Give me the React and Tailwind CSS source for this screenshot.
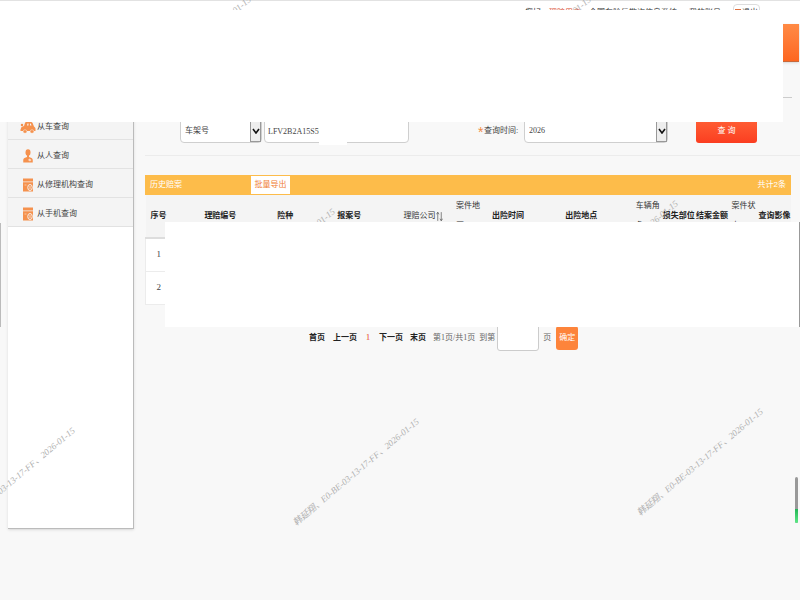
import React, { useState } from 'react';

const CarIcon = () => (
  <svg viewBox="0 0 32 26" className="w-4 h-[13px]" fill="#f5914d">
    <path d="M1 17l2-5 5-2 2-6c.5-1.500 1.500-2 3-2h9c1.500 0 2.500.6 3.200 2l2.800 7 2 2c1 1 1 2 1 3v4h-3a4 4 0 0 1-8 0h-6a4 4 0 0 1-8 0H1z" />
    <path d="M14 9l1-4h2v4zM20 5h1.500l1.500 4h-3z" fill="#f4f4f4" />
    <circle cx="4" cy="8" r="2.500" />
    <circle cx="10" cy="21" r="3.600" stroke="#f4f4f4" />
    <circle cx="24" cy="21" r="3.600" stroke="#f4f4f4" />
  </svg>
);

const PersonIcon = () => (
  <svg viewBox="0 0 20 28" className="w-[10px] h-[14px]" fill="#f5914d">
    <ellipse cx="10" cy="7" rx="5" ry="6.500" />
    <path d="M8 12h4v4l5 2c2 1 2.500 3 2.500 5v4H.5v-4c0-2 .5-4 2.500-5l5-2z" />
    <path d="M10 22l3-3 4 3-3 3z" fill="#fbd9c2" />
  </svg>
);

const RecordIcon = () => (
  <svg viewBox="0 0 20 28" className="w-[10px] h-[14px]">
    <path d="M0 1h20v6H0z" fill="#f5914d" />
    <path d="M0 8.500h20V27H0z" fill="#f5914d" />
    <path d="M3 14h4" stroke="#fbd9c2" strokeWidth="1.500" />
    <ellipse cx="14" cy="19" rx="4.500" ry="6" fill="#f5914d" stroke="#f4f4f4" strokeWidth="2" />
    <path d="M14 16v6" stroke="#f4f4f4" strokeWidth="1.500" />
  </svg>
);

const SortIcon = () => (
  <svg viewBox="0 0 8 12" className="w-[7px] h-[11px] shrink-0" fill="none" stroke="#555" strokeWidth="0.8">
    <path d="M2 11V1.500M.5 3.500L2 1l1.500 2.500M6 1v9.500M4.500 8.500L6 11l1.500-2.500" />
  </svg>
);

const navItems = [
  { label: '从车查询', Icon: CarIcon },
  { label: '从人查询', Icon: PersonIcon },
  { label: '从修理机构查询', Icon: RecordIcon },
  { label: '从手机查询', Icon: RecordIcon },
];

const columns = [
  { title: '序号', width: 26 },
  { title: '理赔编号', width: 98 },
  { title: '险种', width: 32 },
  { title: '报案号', width: 96 },
  { title: '理赔公司', width: 52, sortable: true },
  { title: '案件地', rest: '区', width: 38 },
  { title: '出险时间', width: 42 },
  { title: '出险地点', width: 105 },
  { title: '车辆角', rest: '色', width: 28 },
  { title: '损失部位', width: 34 },
  { title: '结案金额', width: 33 },
  { title: '案件状', rest: '态', width: 30 },
  { title: '查询影像', width: 32 },
];

const totalWidth = columns.reduce((sum, col) => sum + col.width, 0);

const watermarks = [
  'left-[98px] top-[44px]',
  'left-[438px] top-[44px]',
  'left-[182px] top-[256px]',
  'left-[525px] top-[248px]',
  'left-[-78px] top-[475px]',
  'left-[266px] top-[466px]',
  'left-[610px] top-[456px]',
];

const SelectBox = ({ id, label, value, className }) => (
  <div className={`flex h-6 rounded-b-sm border border-[#cfcfcf] bg-white ${className}`}>
    <select
      id={id}
      aria-label={label}
      defaultValue={value}
      className="min-w-0 flex-1 appearance-none bg-transparent pl-1 font-['Liberation_Serif','Noto_Sans_CJK_SC',serif] text-[8px] text-[#444] outline-none"
    >
      <option>{value}</option>
    </select>
    <span className="pointer-events-none flex w-[11px] items-center justify-center border border-[#999] bg-[#eee]">
      <svg viewBox="0 0 8 6" className="h-[6px] w-2" fill="none" stroke="#111" strokeWidth="1.6">
        <path d="M1 1l3 4 3-4" />
      </svg>
    </span>
  </div>
);

const Header = () => (
  <header className="relative h-[111px]">
    <div className="h-6 border-t border-[#e2e2e2] bg-white pt-[3px] pr-10">
      <div className="flex items-center justify-end text-[8px] leading-4 whitespace-nowrap text-[#333]">
        <span>您好，</span>
        <span className="text-[#d9482b]">理赔用户</span>
        <span className="ml-2">全国车险反欺诈信息系统</span>
        <a href="#account" className="ml-3">我的账号</a>
        <a href="#logout" className="ml-3 flex items-center gap-px rounded border border-[#ddd] px-px">
          <i className="h-2 w-[6px] border border-[#e0703f]" />
          退出
        </a>
      </div>
    </div>
    <div className="mr-px h-[38px] border-b border-[#c8683a] bg-linear-to-b from-[#ff8a45] to-[#fd661f] shadow" />
    <div className="mr-2 h-9 border-b border-[#ccc]" />
    <div className="absolute top-[10px] right-[17px] left-0 z-20 h-[112px] bg-white" />
  </header>
);

const Sidebar = () => (
  <aside className="ml-2 min-h-[418px] w-[126px] shrink-0 border-r border-b border-[#bbb] bg-white shadow-sm">
    <nav>
      {navItems.map(({ label, Icon }) => (
        <a
          key={label}
          href="#query"
          className="flex h-[29px] items-center border-b border-[#e2e2e2] bg-[#f4f4f4] pt-1 pl-3 text-[8px] text-[#444]"
        >
          <span className="mr-px flex w-4 justify-center">
            <Icon />
          </span>
          {label}
        </a>
      ))}
    </nav>
  </aside>
);

const SearchForm = ({ onSearch }) => {
  const [frameNo, setFrameNo] = useState('LFV2B2A15S550');

  return (
    <form
      onSubmit={onSearch}
      className="flex h-[45px] border-b border-[#ececec] pt-2 pl-[35px] text-[8px] text-[#444]"
    >
      <SelectBox id="kind" label="查询类型" value="车架号" className="w-[82px]" />
      <div className="relative ml-[2px] w-[145px]">
        <input
          aria-label="车架号"
          value={frameNo}
          onChange={(e) => setFrameNo(e.target.value)}
          className="h-6 w-full rounded-b-sm border border-[#cfcfcf] bg-white px-[3px] font-['Liberation_Serif',serif] text-[8px]"
        />
        <div className="absolute top-0 left-[55px] h-[26px] w-7 bg-white" />
      </div>
      <label htmlFor="year" className="ml-[69px] flex w-[46px] leading-6 whitespace-nowrap">
        <span className="w-[6px] pt-px text-sm leading-6 text-[#f08c45]">*</span>
        查询时间:
      </label>
      <SelectBox id="year" label="查询时间" value="2026" className="w-36" />
      <button
        type="submit"
        className="ml-7 h-6 w-[61px] rounded-[3px] bg-linear-to-b from-[#ff5f35] to-[#fb3d20] text-[8px] text-white"
      >
        查 询
      </button>
    </form>
  );
};

const ResultTable = () => (
  <section className="relative mt-[19px] mr-[9px]">
    <div className="flex h-5 items-center bg-[#fdbc4a] px-[5px] text-[8px] text-white">
      <h2 className="w-[101px]">历史赔案</h2>
      <button type="button" className="h-[18px] w-[39px] bg-white text-[8px] text-[#ef7d35]">
        批量导出
      </button>
      <span className="ml-auto">共计2条</span>
    </div>
    <table className="w-full table-fixed border-collapse text-[8px]">
      <colgroup>
        {columns.map((col) => (
          <col key={col.title} style={{ width: `${(col.width / totalWidth) * 100}%` }} />
        ))}
      </colgroup>
      <thead>
        <tr className="h-[43px] border-b-2 border-[#ddd] bg-[#f4f4f4]">
          {columns.map((col) => {
            if (col.rest) {
              return (
                <th key={col.title} className="p-0 text-[8px] leading-5 font-normal text-[#333]">
                  <div className="mx-auto w-6 text-left">
                    {col.title}
                    <br />
                    {col.rest}
                  </div>
                </th>
              );
            }
            return (
              <th
                key={col.title}
                className={`p-0 whitespace-nowrap ${col.sortable ? 'font-normal text-[#333]' : 'font-bold text-[#222]'}`}
              >
                <span className="flex items-center justify-center">
                  {col.title}
                  {col.sortable && <SortIcon />}
                </span>
              </th>
            );
          })}
        </tr>
      </thead>
      <tbody className="font-['Liberation_Serif',serif] text-[9px] text-[#444]">
        {[1, 2].map((no) => (
          <tr key={no} className="h-[33px] border border-[#ececec] bg-white">
            <td className="p-0 text-center">{no}</td>
            <td colSpan={12} />
          </tr>
        ))}
      </tbody>
    </table>
    <div className="absolute top-[47px] right-[-9px] left-5 z-20 h-[105px] border-r border-[#999] bg-white" />
  </section>
);

const Pagination = () => (
  <div className="mt-[21px] flex h-[25px] items-center pl-[164px] font-['Liberation_Serif','Noto_Sans_CJK_SC',serif] text-[8px] whitespace-nowrap text-[#666]">
    <a href="#first" className="font-bold text-[#222]">首页</a>
    <a href="#prev" className="ml-2 font-bold text-[#222]">上一页</a>
    <span className="ml-[7px] w-2 text-center text-[9px] text-[#e8502f]">1</span>
    <a href="#next" className="ml-[7px] font-bold text-[#222]">下一页</a>
    <a href="#last" className="ml-[7px] font-bold text-[#222]">末页</a>
    <span className="ml-[7px]">第1页/共1页</span>
    <label htmlFor="page" className="ml-1">到第</label>
    <input id="page" className="ml-[2px] h-[25px] w-[42px] rounded-b-[3px] border border-[#ccc] bg-white px-1" />
    <span className="ml-1">页</span>
    <button type="button" className="ml-[5px] h-6 w-[22px] rounded-[3px] bg-[#fd843b] text-[8px] text-white">
      确定
    </button>
  </div>
);

const App = () => {
  const handleSearch = (e) => {
    e.preventDefault();
  };

  return (
    <div className="relative min-h-screen overflow-hidden bg-[#f8f8f8] font-['Liberation_Sans','Noto_Sans_CJK_SC',sans-serif]">
      <Header />
      <div className="flex">
        <Sidebar />
        <main className="ml-[11px] min-w-0 flex-1">
          <SearchForm onSearch={handleSearch} />
          <ResultTable />
          <Pagination />
        </main>
      </div>

      {/* Watermarks */}
      {watermarks.map((position) => (
        <span
          key={position}
          className={`pointer-events-none absolute z-10 w-[180px] -rotate-40 text-center font-['Liberation_Serif','Noto_Sans_CJK_SC',serif] text-[9px] leading-3 whitespace-nowrap text-[#b0b0b0] italic ${position}`}
        >
          韩延翔、E0-BE-03-13-17-FF、2026-01-15
        </span>
      ))}

      {/* Scroll indicators */}
      <div className="absolute top-[223px] left-0 h-[104px] w-px bg-[#bbb]" />
      <div className="absolute top-[477px] right-[2px] z-10 flex h-[46px] w-[3px] flex-col overflow-hidden rounded-full bg-[#999]">
        <span className="mt-auto h-[14px] bg-linear-to-b from-[#20b455] to-[#5bea86]" />
      </div>
    </div>
  );
};

export default App;
